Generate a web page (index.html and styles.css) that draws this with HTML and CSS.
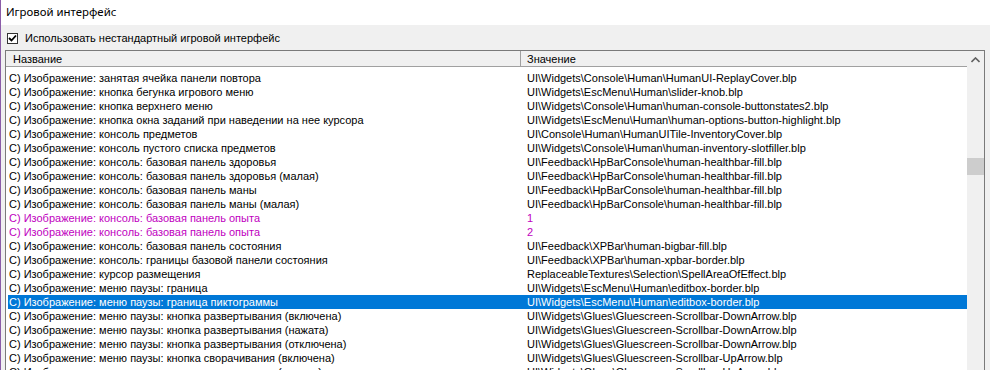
FILE: index.html
```html
<!DOCTYPE html>
<html lang="ru">
<head>
<meta charset="utf-8">
<title>Игровой интерфейс</title>
<link rel="stylesheet" href="styles.css">
</head>
<body>
<div class="window">
  <div class="titlebar">Игровой интерфейс</div>
  <div class="panel">
    <label class="check-row">
      <span class="checkbox"><svg width="9" height="9" viewBox="0 0 9 9"><path d="M1 4 L3.5 6.5 L8 1.5" fill="none" stroke="#000" stroke-width="1.8"/></svg></span>
      <span class="check-label">Использовать нестандартный игровой интерфейс</span>
    </label>
    <div class="list">
      <div class="list-main">
        <div class="header">
          <div class="hcell hcell-name">Название</div>
          <div class="hcell hcell-value">Значение</div>
        </div>
        <div class="rows">
          <div class="row"><span>C) Изображение: занятая ячейка панели повтора</span><span>UI\Widgets\Console\Human\HumanUI-ReplayCover.blp</span></div>
          <div class="row"><span>C) Изображение: кнопка бегунка игрового меню</span><span>UI\Widgets\EscMenu\Human\slider-knob.blp</span></div>
          <div class="row"><span>C) Изображение: кнопка верхнего меню</span><span>UI\Widgets\Console\Human\human-console-buttonstates2.blp</span></div>
          <div class="row"><span>C) Изображение: кнопка окна заданий при наведении на нее курсора</span><span>UI\Widgets\EscMenu\Human\human-options-button-highlight.blp</span></div>
          <div class="row"><span>C) Изображение: консоль предметов</span><span>UI\Console\Human\HumanUITile-InventoryCover.blp</span></div>
          <div class="row"><span>C) Изображение: консоль пустого списка предметов</span><span>UI\Widgets\Console\Human\human-inventory-slotfiller.blp</span></div>
          <div class="row"><span>C) Изображение: консоль: базовая панель здоровья</span><span>UI\Feedback\HpBarConsole\human-healthbar-fill.blp</span></div>
          <div class="row"><span>C) Изображение: консоль: базовая панель здоровья (малая)</span><span>UI\Feedback\HpBarConsole\human-healthbar-fill.blp</span></div>
          <div class="row"><span>C) Изображение: консоль: базовая панель маны</span><span>UI\Feedback\HpBarConsole\human-healthbar-fill.blp</span></div>
          <div class="row"><span>C) Изображение: консоль: базовая панель маны (малая)</span><span>UI\Feedback\HpBarConsole\human-healthbar-fill.blp</span></div>
          <div class="row row-modified"><span>C) Изображение: консоль: базовая панель опыта</span><span>1</span></div>
          <div class="row row-modified"><span>C) Изображение: консоль: базовая панель опыта</span><span>2</span></div>
          <div class="row"><span>C) Изображение: консоль: базовая панель состояния</span><span>UI\Feedback\XPBar\human-bigbar-fill.blp</span></div>
          <div class="row"><span>C) Изображение: консоль: границы базовой панели состояния</span><span>UI\Feedback\XPBar\human-xpbar-border.blp</span></div>
          <div class="row"><span>C) Изображение: курсор размещения</span><span>ReplaceableTextures\Selection\SpellAreaOfEffect.blp</span></div>
          <div class="row"><span>C) Изображение: меню паузы: граница</span><span>UI\Widgets\EscMenu\Human\editbox-border.blp</span></div>
          <div class="row row-selected"><span>C) Изображение: меню паузы: граница пиктограммы</span><span>UI\Widgets\EscMenu\Human\editbox-border.blp</span></div>
          <div class="row"><span>C) Изображение: меню паузы: кнопка развертывания (включена)</span><span>UI\Widgets\Glues\Gluescreen-Scrollbar-DownArrow.blp</span></div>
          <div class="row"><span>C) Изображение: меню паузы: кнопка развертывания (нажата)</span><span>UI\Widgets\Glues\Gluescreen-Scrollbar-DownArrow.blp</span></div>
          <div class="row"><span>C) Изображение: меню паузы: кнопка развертывания (отключена)</span><span>UI\Widgets\Glues\Gluescreen-Scrollbar-DownArrow.blp</span></div>
          <div class="row"><span>C) Изображение: меню паузы: кнопка сворачивания (включена)</span><span>UI\Widgets\Glues\Gluescreen-Scrollbar-UpArrow.blp</span></div>
          <div class="row"><span>C) Изображение: меню паузы: кнопка сворачивания (нажата)</span><span>UI\Widgets\Glues\Gluescreen-Scrollbar-UpArrow.blp</span></div>
        </div>
      </div>
      <div class="scrollbar">
        <div class="sb-arrow"><svg width="9" height="6" viewBox="0 0 9 6"><path d="M0.5 5 L4.5 1 L8.5 5" fill="none" stroke="#606060" stroke-width="1.6"/></svg></div>
        <div class="sb-track"><div class="sb-thumb"></div></div>
      </div>
    </div>
  </div>
</div>
</body>
</html>
```

FILE: styles.css
```css
html, body {
  margin: 0;
  padding: 0;
  height: 370px;
  overflow: hidden;
  background: #f0f0f0;
}

.window {
  height: 370px;
  border-left: 1px solid #8a5ca8;
  background: #f0f0f0;
  font-family: "Liberation Sans", Arial, sans-serif;
  font-size: 11px;
  color: #000;
}

.titlebar {
  height: 25px;
  background: #fff;
  padding-left: 5px;
  font-family: "Noto Sans", "Liberation Sans", sans-serif;
  font-size: 11.4px;
  line-height: 24px;
  box-sizing: border-box;
}

.panel {
  padding: 6px 0 0 4px;
}

.check-row {
  display: flex;
  align-items: center;
  height: 14px;
  padding-left: 2px;
  gap: 7px;
}

.checkbox {
  width: 11px;
  height: 11px;
  box-sizing: border-box;
  border: 1px solid #333;
  background: #fff;
  display: flex;
  align-items: center;
  justify-content: center;
}

.check-label {
  line-height: 14px;
}

.list {
  margin-top: 5px;
  width: 980px;
  height: 330px;
  box-sizing: border-box;
  border: 1px solid #7a7a7a;
  display: flex;
  background: #fff;
}

.list-main {
  flex: 1;
  min-width: 0;
}

.header {
  display: flex;
  height: 15px;
  border-bottom: 1px solid #a0a0a0;
  background: #f0f0f0;
}

.hcell {
  line-height: 16px;
  box-sizing: border-box;
}

.hcell-name {
  width: 515px;
  padding-left: 7px;
  border-right: 1px solid #a0a0a0;
}

.hcell-value {
  padding-left: 6px;
}

.rows {
  padding: 4px 0 0 2px;
}

.row {
  display: grid;
  grid-template-columns: 519px 1fr;
  height: 14px;
  line-height: 14px;
  white-space: nowrap;
}

.row span:first-child {
  padding-left: 1px;
}

.row-modified {
  color: #c000c0;
}

.row-selected {
  background: #0078d7;
  color: #fff;
}

.scrollbar {
  width: 17px;
  background: #f0f0f0;
  display: flex;
  flex-direction: column;
}

.sb-arrow {
  height: 17px;
  display: flex;
  align-items: center;
  justify-content: center;
}

.sb-track {
  flex: 1;
  padding-top: 90px;
}

.sb-thumb {
  height: 17px;
  background: #cdcdcd;
}
```
